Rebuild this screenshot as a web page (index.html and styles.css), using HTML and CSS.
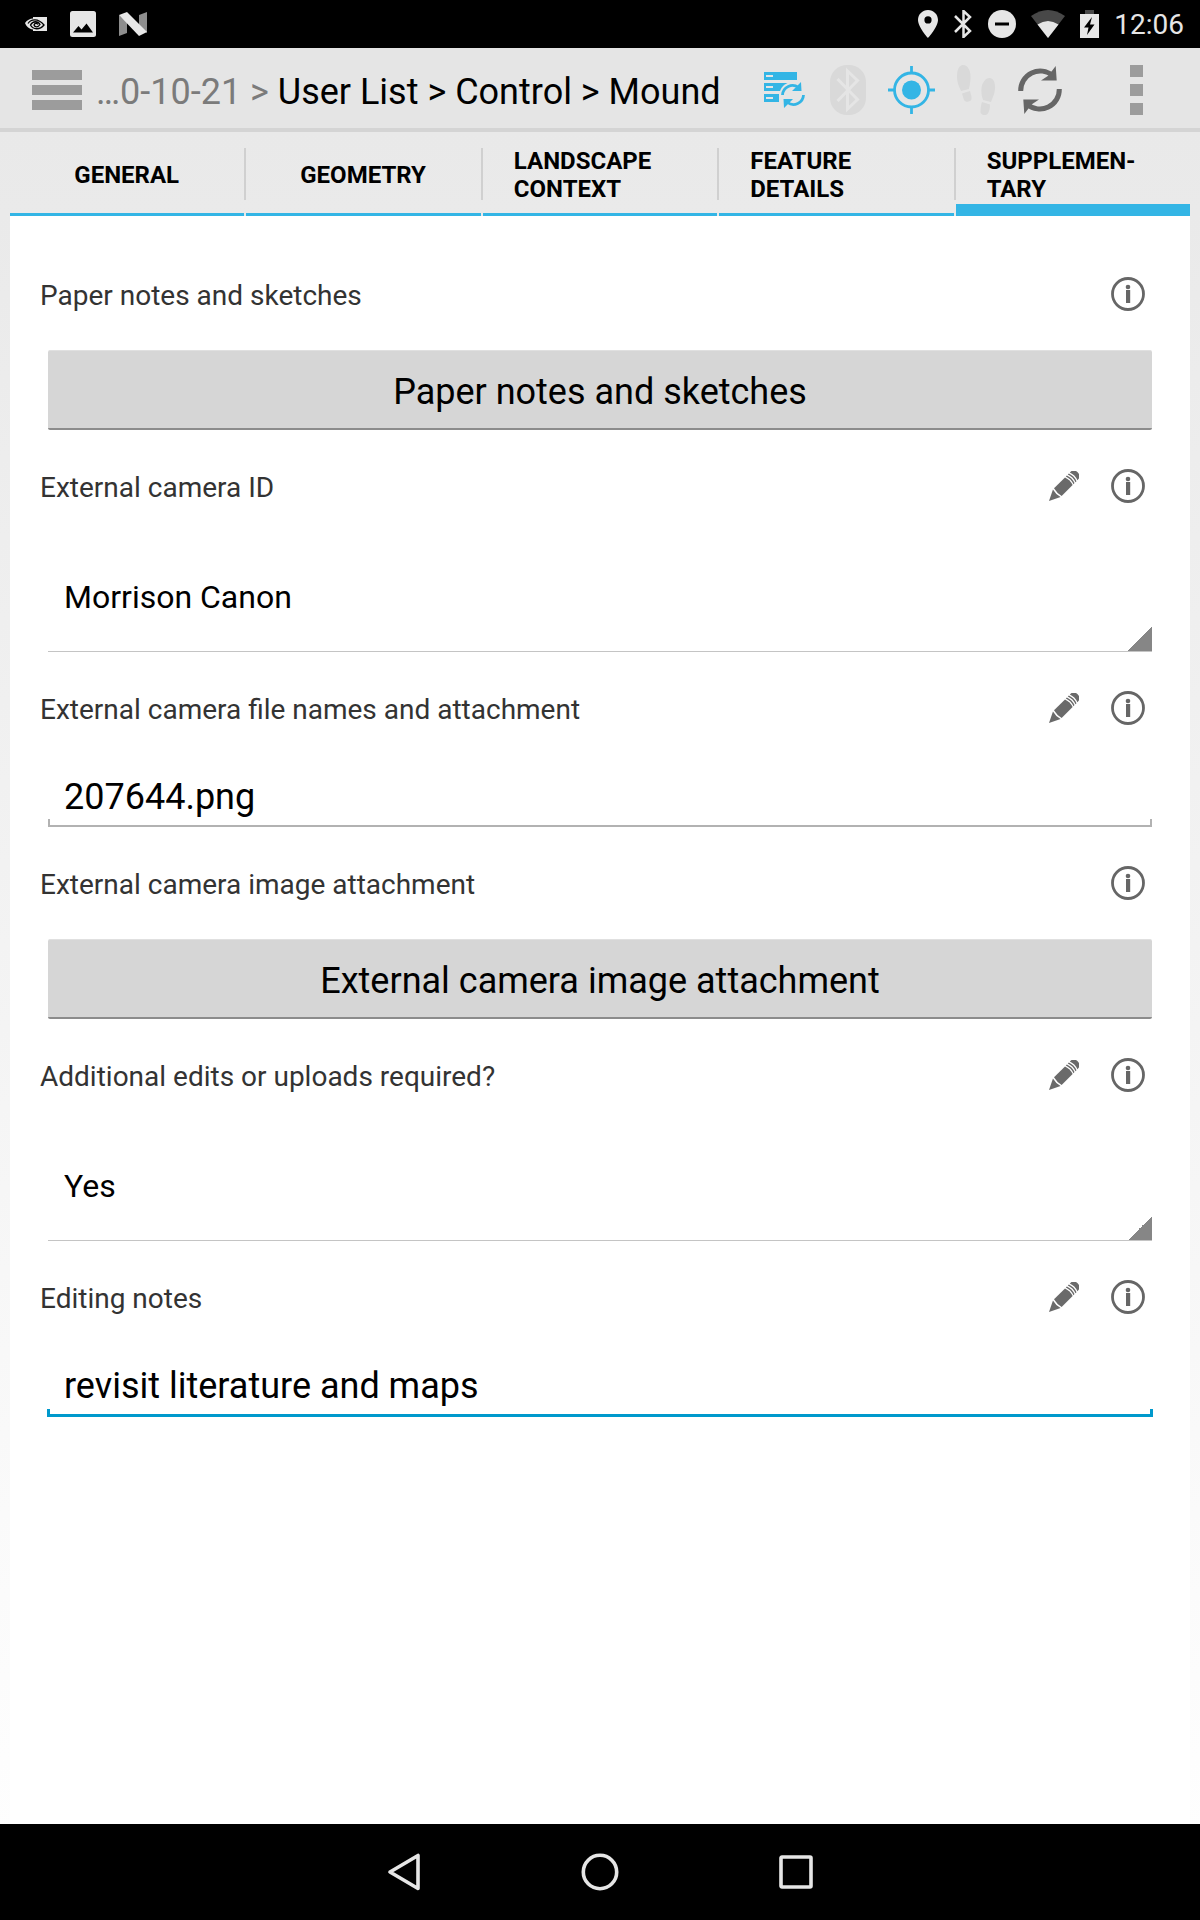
FILE: index.html
```html
<!DOCTYPE html>
<html lang="en">
<head>
<meta charset="utf-8">
<meta name="viewport" content="width=device-width, initial-scale=1">
<title>Mound</title>
<link rel="stylesheet" href="styles.css">
</head>
<body>
<svg class="defs" width="0" height="0" aria-hidden="true">
  <symbol id="info" viewBox="0 0 34 34">
    <circle cx="17" cy="17" r="15.5" fill="none" stroke="#666" stroke-width="2.8"/>
    <circle cx="17" cy="10" r="2.3" fill="#666"/>
    <path d="M15 13h4.2v13h-4.2z" fill="#666"/>
  </symbol>
  <symbol id="pencil" viewBox="0 0 30 30">
    <g transform="translate(0 30) rotate(-45)" fill="#6a6a6a">
      <path d="M0 0L11-5.4Q9.500 0 11 5.400z"/>
      <path d="M12.500-5.400H28Q30 0 28 5.400H12.500Q11 0 12.500-5.400z"/>
      <path d="M29.200-5.400H30.700Q32.700 0 30.700 5.400H29.200Q31.200 0 29.200-5.400z"/>
      <path d="M32-5.400H33.500Q35.500 0 33.500 5.400H32Q34 0 32-5.400z"/>
      <path d="M34.800-5.400H36Q40.500-5 40.500 0T36 5.400H34.800Q36.800 0 34.800-5.400z"/>
    </g>
  </symbol>
</svg>

<div class="status">
  <div class="status-left">
    <svg width="22" height="14" viewBox="0 0 22 14"><path d="M8 0h14v14H8v-1.500C4 12 1 9 0 6 2 3 5 1.500 8 1.500z" fill="#e6e6e6"/><path d="M3 6.500C6 2 13 1 19 8c-4 5-11 5-13.500 0C8 3.500 13 4 15 7.500c-2 3-5 3-6 .5 1-2.500 3-2 4-.5" fill="none" stroke="#000" stroke-width="1.300"/></svg>
    <svg width="26" height="26" viewBox="0 0 26 26"><rect width="26" height="26" rx="2.500" fill="#e6e6e6"/><path d="M3 21.500l5.500-6.500 3 3.500 5-6L23 21.500z"/></svg>
    <svg width="28" height="24" viewBox="0 0 28 24"><path d="M0 3l8 7v11l-8 3zM28 0l-8 3v11l8 7z" fill="#8e8e8e"/><path d="M0 3l8-3 20 20-8 4z" fill="#e8e8e8"/></svg>
  </div>
  <div class="status-right">
    <svg width="20" height="28" viewBox="0 0 20 28"><path d="M10 0C4.400 0 0 4.400 0 10c0 7 10 18 10 18s10-11 10-18c0-5.600-4.400-10-10-10zm0 13.500a3.600 3.600 0 1 1 0-7.200 3.600 3.600 0 0 1 0 7.200z" fill="#e6e6e6"/></svg>
    <svg width="20" height="28" viewBox="0 0 20 28"><path d="M2 6l15 15-6.500 6V1L17 7 2 22" fill="none" stroke="#e6e6e6" stroke-width="2.500"/></svg>
    <svg width="28" height="28" viewBox="0 0 28 28"><circle cx="14" cy="14" r="14" fill="#e6e6e6"/><path d="M7 14h14" stroke="#000" stroke-width="3"/></svg>
    <svg width="34" height="28" viewBox="0 0 34 28"><path d="M17 28L0 6q17-12 34 0z" fill="#484848"/><path d="M17 28L6.500 14.500q10.500-7 21 0z" fill="#e6e6e6"/></svg>
    <svg width="19" height="28" viewBox="0 0 19 28"><path d="M5 0h9v4H5z" fill="#484848"/><path d="M0 4h19v24H0z" fill="#e6e6e6"/><path d="M12 7L4 17.500h4.500L7 25l7.500-10.500H10z"/></svg>
    <span class="clock">12:06</span>
  </div>
</div>

<header class="bar">
  <button class="menu" aria-label="Menu"><i></i><i></i><i></i></button>
  <nav class="crumbs"><span class="past">…0-10-21 &gt; </span>User List &gt; Control &gt; Mound</nav>
  <div class="actions">
    <button class="action" aria-label="Sync records">
      <svg width="64" height="50" viewBox="0 0 64 50"><path d="M12 7h33v8H12zM12 18h25l-7 8H12zM12 29h15v8H12z" fill="#33b5e5"/><path d="M14 10h7v2h-7zM14 21h7v2h-7zM14 32h7v2h-7z" fill="#e5e5e5"/><circle cx="40.500" cy="30" r="13" fill="#e5e5e5"/><path d="M30.500 30a10 10 0 0 1 16-7.500M51.500 30a10 10 0 0 1-16 7.500" fill="none" stroke="#33b5e5" stroke-width="2.800"/><path d="M49 17l.5 9h-9.500zM32 43l-.5-9H41z" fill="#33b5e5"/></svg>
    </button>
    <button class="action" aria-label="Bluetooth">
      <svg width="64" height="50" viewBox="0 0 64 50"><rect x="14" width="36" height="50" rx="17" fill="#d9d9d9"/><path d="M21.500 14l20 20.500L31.500 44V6l10 9.500-20 20.500" fill="none" stroke="#e5e5e5" stroke-width="3"/></svg>
    </button>
    <button class="action" aria-label="Location">
      <svg width="64" height="50" viewBox="0 0 64 50"><g fill="none" stroke="#33b5e5" stroke-width="2.800"><circle cx="31.500" cy="25" r="17"/><path d="M31.500 1v7M31.500 42v7M8 25h6M49 25h6"/></g><circle cx="31.500" cy="25" r="9.500" fill="#33b5e5"/></svg>
    </button>
    <button class="action" aria-label="Track log">
      <svg width="64" height="50" viewBox="0 0 64 50"><g fill="#d9d9d9"><path d="M19 0c5 0 8 6 7.500 13-.3 6-1 8-1.500 11l-8 2c-2-5-4-8-4-15C13 5 15 0 19 0zM18 28.500l8-2.500c1 4 2 6 1.500 8-.5 3-6 4-7.500 1z"/><path d="M45.500 13c4 0 6 5 5.500 11-.5 5-2 8-4 13l-8-2c-1-4-2-6-1.500-12 .5-5 4-10 8-10zM38 37l8 2.500c0 4-1 8-2.500 9.500-2 2-7 1-7-2 0-4 .5-7 1.500-10z"/></g></svg>
    </button>
    <button class="action" aria-label="Refresh">
      <svg width="64" height="50" viewBox="0 0 64 50"><g fill="none" stroke="#666" stroke-width="5"><path d="M12.700 26a19.500 19.500 0 0 1 32-15.500M51.300 24a19.500 19.500 0 0 1-32 15.500"/></g><path d="M47.700 1l1 14.500H33l7.500-5zM16.300 49l-1-14.500H31l-7.500 5z" fill="#666"/></svg>
    </button>
  </div>
  <button class="action more" aria-label="More options"><i></i><i></i><i></i></button>
</header>

<div class="tabs" role="tablist">
  <button class="tab" role="tab"><span>GENERAL</span></button>
  <button class="tab" role="tab"><span>GEOMETRY</span></button>
  <button class="tab" role="tab"><span>LANDSCAPE CONTEXT</span></button>
  <button class="tab" role="tab"><span>FEATURE DETAILS</span></button>
  <button class="tab selected" role="tab" aria-selected="true"><span>SUPPLEMEN-TARY</span></button>
</div>

<main class="panel">
  <form class="form">
    <div class="head">
      <label for="sketches">Paper notes and sketches</label>
      <button type="button" class="icon" aria-label="Info"><svg width="34" height="34"><use href="#info"/></svg></button>
    </div>
    <button type="button" class="control attach" id="sketches">Paper notes and sketches</button>

    <div class="head">
      <label for="camera">External camera ID</label>
      <button type="button" class="icon" aria-label="Annotate"><svg width="30" height="30"><use href="#pencil"/></svg></button>
      <button type="button" class="icon" aria-label="Info"><svg width="34" height="34"><use href="#info"/></svg></button>
    </div>
    <select class="control pick" id="camera"><option>Morrison Canon</option></select>

    <div class="head">
      <label for="files">External camera file names and attachment</label>
      <button type="button" class="icon" aria-label="Annotate"><svg width="30" height="30"><use href="#pencil"/></svg></button>
      <button type="button" class="icon" aria-label="Info"><svg width="34" height="34"><use href="#info"/></svg></button>
    </div>
    <input class="control text" id="files" type="text" value="207644.png">

    <div class="head">
      <label for="image">External camera image attachment</label>
      <button type="button" class="icon" aria-label="Info"><svg width="34" height="34"><use href="#info"/></svg></button>
    </div>
    <button type="button" class="control attach" id="image">External camera image attachment</button>

    <div class="head">
      <label for="edits">Additional edits or uploads required?</label>
      <button type="button" class="icon" aria-label="Annotate"><svg width="30" height="30"><use href="#pencil"/></svg></button>
      <button type="button" class="icon" aria-label="Info"><svg width="34" height="34"><use href="#info"/></svg></button>
    </div>
    <select class="control pick" id="edits"><option>Yes</option></select>

    <div class="head">
      <label for="notes">Editing notes</label>
      <button type="button" class="icon" aria-label="Annotate"><svg width="30" height="30"><use href="#pencil"/></svg></button>
      <button type="button" class="icon" aria-label="Info"><svg width="34" height="34"><use href="#info"/></svg></button>
    </div>
    <input class="control text active" id="notes" type="text" value="revisit literature and maps">
  </form>
</main>

<nav class="system">
  <button aria-label="Back"><svg width="36" height="40" viewBox="0 0 36 40"><path d="M4 20L32 3.500v33z" fill="none" stroke="#e6e6e6" stroke-width="3.600" stroke-linejoin="round"/></svg></button>
  <button aria-label="Home"><svg width="40" height="40" viewBox="0 0 40 40"><circle cx="20" cy="20" r="16.700" fill="none" stroke="#e6e6e6" stroke-width="3.600"/></svg></button>
  <button aria-label="Recent apps"><svg width="40" height="40" viewBox="0 0 40 40"><rect x="5" y="5" width="30" height="30" rx="1" fill="none" stroke="#e6e6e6" stroke-width="3.600"/></svg></button>
</nav>
</body>
</html>
```

FILE: styles.css
```css
* {
  box-sizing: border-box;
}

body {
  margin: 0;
  min-height: 100vh;
  display: flex;
  flex-direction: column;
  font-family: Roboto, "Liberation Sans", sans-serif;
  color: #000;
  background: linear-gradient(#e9e9e9 132px, #fff);
}

button,
input,
select {
  margin: 0;
  padding: 0;
  border: 0;
  border-radius: 0;
  background: none;
  color: inherit;
  font: inherit;
  outline: 0;
}

svg {
  display: block;
  flex: none;
}

.defs {
  position: absolute;
}

/* Status bar */
.status {
  height: 48px;
  padding: 0 16px 0 25px;
  display: flex;
  align-items: center;
  justify-content: space-between;
  background: #000;
}

.status-left,
.status-right {
  display: flex;
  align-items: center;
}

.status-left {
  gap: 23px;
}

.status-right {
  gap: 15px;
}

.clock {
  padding-top: 2px;
  color: #e6e6e6;
  font-size: 28px;
  line-height: 32px;
}

/* Action bar */
.bar {
  height: 84px;
  padding: 4px 32px 0;
  display: flex;
  align-items: center;
  background: #e5e5e5;
  border-bottom: 4px solid #d4d4d4;
}

.menu {
  width: 50px;
  display: grid;
  gap: 5px;
}

.menu i {
  height: 10px;
  background: #9c9c9c;
}

.crumbs {
  flex: 1;
  margin-left: 14px;
  padding-top: 4px;
  font-size: 36px;
  line-height: 44px;
  white-space: nowrap;
}

.past {
  color: #7b7b7b;
}

.actions {
  display: flex;
  margin-right: 32px;
}

.action {
  width: 64px;
  height: 64px;
  display: flex;
  align-items: center;
  justify-content: center;
}

.more {
  flex-direction: column;
  gap: 7px;
}

.more i {
  width: 13px;
  height: 12px;
  background: #9c9c9c;
}

/* Tabs */
.tabs {
  margin: 0 10px;
  display: flex;
  gap: 2px;
}

.tab {
  flex: 1 1 0;
  height: 84px;
  padding: 2px 32px 0 31px;
  display: flex;
  align-items: center;
  justify-content: center;
  position: relative;
  text-align: left;
  font-size: 24px;
  font-weight: 700;
  line-height: 28px;
  box-shadow: inset 0 -3px #33b5e5;
}

.tab.selected {
  box-shadow: inset 0 -12px #33b5e5;
}

.tab + .tab::before {
  content: "";
  position: absolute;
  left: -2px;
  top: 16px;
  width: 2px;
  height: 52px;
  background: #d0d0d0;
}

/* Form */
.panel {
  flex: 1;
  margin: 0 10px;
  padding: 46px 30px;
  background: #fff;
}

.form {
  display: flex;
  flex-direction: column;
}

.head {
  height: 64px;
  display: flex;
  align-items: center;
}

.head label {
  flex: 1;
  padding-top: 4px;
  font-size: 28px;
  line-height: 32px;
  color: #333;
}

.icon {
  width: 64px;
  height: 64px;
  display: flex;
  align-items: center;
  justify-content: center;
}

.control {
  margin: 24px 8px;
}

.attach {
  height: 80px;
  padding-top: 4px;
  border-radius: 2px;
  border-top: 1px solid #e0e0e0;
  border-bottom: 2px solid #8c8c8c;
  background: #d6d6d6;
  font-size: 36px;
  line-height: 44px;
}

.pick {
  height: 110px;
  padding: 0 16px;
  appearance: none;
  font-size: 32px;
  background: linear-gradient(135deg, transparent 50%, #868686 50%) right bottom / 24px 24px no-repeat;
  border-bottom: 1px solid #c4c4c4;
}

.text {
  --line: #b2b2b2;
  --size: 2px;
  height: 63px;
  padding: 2px 16px 0;
  font-size: 36px;
  background:
    linear-gradient(var(--line), var(--line)) left bottom / 100% var(--size) no-repeat,
    linear-gradient(var(--line), var(--line)) left bottom / var(--size) 8px no-repeat,
    linear-gradient(var(--line), var(--line)) right bottom / var(--size) 8px no-repeat;
}

.text.active {
  --line: #0099cc;
  --size: 3px;
  height: 64px;
  margin: 24px 7px;
  padding: 2px 17px 0;
}

/* System navigation */
.system {
  height: 96px;
  display: flex;
  justify-content: center;
  background: #000;
}

.system button {
  width: 196px;
  display: flex;
  align-items: center;
  justify-content: center;
}
```
